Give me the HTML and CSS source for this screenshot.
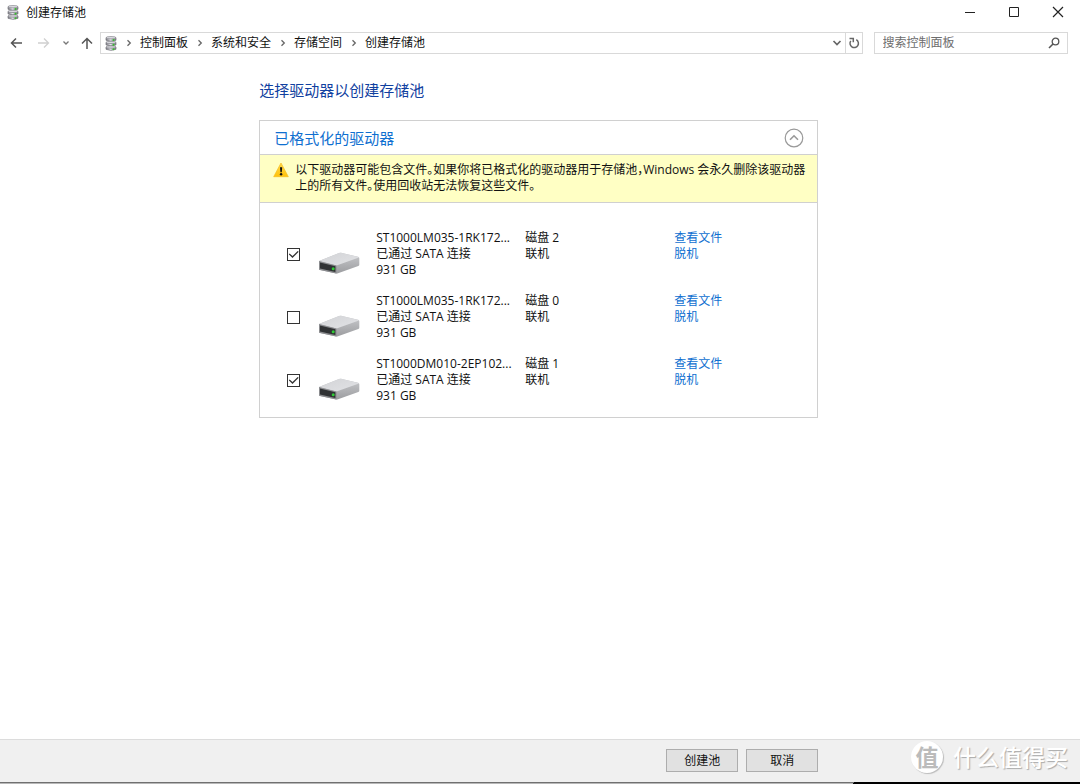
FILE: index.html
```html
<!DOCTYPE html>
<html lang="zh-CN">
<head>
<meta charset="utf-8">
<meta name="viewport" content="width=device-width, initial-scale=1">
<title>创建存储池</title>
<link rel="stylesheet" href="styles.css">
</head>
<body>
<svg class="defs" width="0" height="0" aria-hidden="true">
  <defs>
    <linearGradient id="disk" x1="0" x2="1"><stop offset="0" stop-color="#77777f"/><stop offset=".45" stop-color="#e4e4ea"/><stop offset="1" stop-color="#77777f"/></linearGradient>
    <linearGradient id="top" x1="0" y1="0" x2="1" y2="1"><stop offset="0" stop-color="#d2d3d6"/><stop offset="1" stop-color="#e2e3e6"/></linearGradient>
    <linearGradient id="side" x1="0" y1="0" x2="0" y2="1"><stop offset="0" stop-color="#c9cacd"/><stop offset="1" stop-color="#9c9da0"/></linearGradient>
    <linearGradient id="warn" x1="0" y1="0" x2="0" y2="1"><stop offset="0" stop-color="#ffd84a"/><stop offset="1" stop-color="#ffc20a"/></linearGradient>
  </defs>
  <symbol id="pool" viewBox="0 0 12 15">
    <g fill="url(#disk)" stroke="#77777d" stroke-width=".7">
      <path d="M1 11v2.300q5 2.200 10 0V11q-5 1.500-10 0z"/><path d="M1 6.300v2.600q5 2 10 0V6.300q-5 1.500-10 0z"/><path d="M1 1.700v2.600q5 2 10 0V1.700q-5 1.500-10 0z"/>
    </g>
    <g fill="#dedee4" stroke="#77777d" stroke-width=".6"><ellipse cx="6" cy="1.700" rx="5" ry="1.200"/><ellipse cx="6" cy="6.400" rx="5" ry="1.100"/><ellipse cx="6" cy="11" rx="5" ry="1.100"/></g>
    <g fill="#35c02b"><circle cx="8.500" cy="4" r="1"/><circle cx="8.500" cy="8.700" r="1"/><circle cx="8.500" cy="13.200" r="1"/></g>
  </symbol>
  <symbol id="chev" viewBox="0 0 6 8"><path d="M1.500 1.200 4.300 4 1.500 6.800" fill="none" stroke="#666" stroke-width="1.300"/></symbol>
  <symbol id="drive" viewBox="0 0 42 22">
    <path d="M1 9 21 1q1-.5 2-.3l17 4.100q1.300.3 1.300 1.400v6.600q0 .8-1 1.200L20 21.300q-1 .4-2 .2L2 18q-1-.2-1-1z" fill="url(#side)"/>
    <path d="M1 9 21 1q1-.5 2-.3l17.500 4.200q.8.3-.3.9L18.500 13.500z" fill="url(#top)"/>
    <path d="M1 8.900 18.500 13.500v8L2 18q-1-.2-1-1z" fill="#8b8c8f"/>
    <path d="M2 10.400 17.400 14.300v5.600L2 16.500z" fill="#303234"/>
    <circle cx="15.200" cy="16.700" r="1.500" fill="#2fca35"/>
  </symbol>
</svg>
<div class="window">
  <header class="titlebar">
    <svg class="pool"><use href="#pool"/></svg>
    <span class="title">创建存储池</span>
    <div class="caption">
      <button type="button" aria-label="最小化"><svg width="12" height="12"><path d="M1 6.500h10" stroke="#222" /></svg></button>
      <button type="button" aria-label="最大化"><svg width="12" height="12"><path d="M1.500 1.500h9v9h-9z" fill="none" stroke="#222"/></svg></button>
      <button type="button" aria-label="关闭"><svg width="12" height="12"><path d="m1 1 10 10M11 1 1 11" stroke="#222" stroke-width="1.200"/></svg></button>
    </div>
  </header>
  <nav class="navbar" aria-label="地址">
    <div class="travel">
      <button type="button" aria-label="后退"><svg width="12" height="12"><path d="M12 6H1.500M6 1.500 1.500 6 6 10.500" fill="none" stroke="#555" stroke-width="1.500"/></svg></button>
      <button type="button" aria-label="前进" disabled><svg width="12" height="12"><path d="M0 6h10.500M6 1.500 10.500 6 6 10.500" fill="none" stroke="#d0d0d0" stroke-width="1.300"/></svg></button>
      <button type="button" class="recent" aria-label="最近位置"><svg width="8" height="6"><path d="M1.500 1.500 4 4l2.500-2.500" fill="none" stroke="#777" stroke-width="1.300"/></svg></button>
      <button type="button" aria-label="向上"><svg width="12" height="12"><path d="M6 12V1.500M1 6.500l5-5 5 5" fill="none" stroke="#555" stroke-width="1.500"/></svg></button>
    </div>
    <div class="address">
      <svg class="pool"><use href="#pool"/></svg>
      <ol class="crumbs">
        <li><svg class="chev"><use href="#chev"/></svg><a href="#">控制面板</a></li>
        <li><svg class="chev"><use href="#chev"/></svg><a href="#">系统和安全</a></li>
        <li><svg class="chev"><use href="#chev"/></svg><a href="#">存储空间</a></li>
        <li><svg class="chev"><use href="#chev"/></svg><a href="#">创建存储池</a></li>
      </ol>
      <button type="button" class="drop" aria-label="历史"><svg width="10" height="8"><path d="M1.500 2 5 5.500 8.500 2" fill="none" stroke="#666" stroke-width="1.700"/></svg></button>
      <button type="button" class="refresh" aria-label="刷新"><svg width="12" height="12"><path d="M2.800 3.900A4.200 4.200 0 1 0 8.300 2.700M1.500 1.500h3.800v3.800" fill="none" stroke="#666" stroke-width="1.500"/></svg></button>
    </div>
    <div class="search">
      <input type="search" aria-label="搜索控制面板" placeholder="搜索控制面板">
      <svg width="12" height="12"><circle cx="7.500" cy="4.500" r="3.300" fill="none" stroke="#555" stroke-width="1.300"/><path d="M5 7 1 11" stroke="#555" stroke-width="1.600"/></svg>
    </div>
  </nav>
  <main class="content">
    <h1>选择驱动器以创建存储池</h1>
    <section class="panel">
      <div class="panel-head">
        <h2>已格式化的驱动器</h2>
        <button type="button" aria-label="折叠"><svg width="20" height="20"><circle cx="10" cy="10" r="8.800" fill="none" stroke="#999" stroke-width="1.200"/><path d="m6 11.800 4-4 4 4" fill="none" stroke="#999" stroke-width="1.600"/></svg></button>
      </div>
      <div class="warning">
        <svg width="16" height="16" viewBox="0 0 16 16"><path d="M8 1 15.300 14.700H.7z" fill="url(#warn)" stroke="#f5bd20" stroke-width=".7" stroke-linejoin="round"/><path d="M7 5.300h2.200l-.4 4.900H7.400z" fill="#111"/><circle cx="8.100" cy="12.300" r="1.200" fill="#111"/></svg>
        <p>以下驱动器可能包含文件。如果你将已格式化的驱动器用于存储池，Windows 会永久删除该驱动器<br>上的所有文件。使用回收站无法恢复这些文件。</p>
      </div>
      <ul class="drives">
        <li>
          <input type="checkbox" id="d2" checked>
          <svg class="drive"><use href="#drive"/></svg>
          <label for="d2"><span>ST1000LM035-1RK172...</span><span>已通过 SATA 连接</span><span>931 GB</span></label>
          <div class="lines"><span>磁盘 2</span><span>联机</span></div>
          <div class="lines"><a href="#">查看文件</a><a href="#">脱机</a></div>
        </li>
        <li>
          <input type="checkbox" id="d0">
          <svg class="drive"><use href="#drive"/></svg>
          <label for="d0"><span>ST1000LM035-1RK172...</span><span>已通过 SATA 连接</span><span>931 GB</span></label>
          <div class="lines"><span>磁盘 0</span><span>联机</span></div>
          <div class="lines"><a href="#">查看文件</a><a href="#">脱机</a></div>
        </li>
        <li>
          <input type="checkbox" id="d1" checked>
          <svg class="drive"><use href="#drive"/></svg>
          <label for="d1"><span>ST1000DM010-2EP102...</span><span>已通过 SATA 连接</span><span>931 GB</span></label>
          <div class="lines"><span>磁盘 1</span><span>联机</span></div>
          <div class="lines"><a href="#">查看文件</a><a href="#">脱机</a></div>
        </li>
      </ul>
    </section>
  </main>
  <footer class="footer">
    <div class="actions">
      <button type="button">创建池</button>
      <button type="button">取消</button>
    </div>
    <div class="watermark"><span class="seal">值</span><span>什么值得买</span></div>
  </footer>
  <div class="edge"></div>
</div>
</body>
</html>
```
FILE: styles.css
```css
* { box-sizing: border-box; }

body {
  margin: 0;
  background: #fff;
  color: #111;
  font: 12px/16px "Open Sans", "Noto Sans CJK SC", sans-serif;
}

h1, h2, p, ul, ol { margin: 0; padding: 0; font-weight: 400; }
ul, ol { list-style: none; }
a { color: inherit; text-decoration: none; }
svg { display: block; flex: none; }
.defs { position: absolute; }

button {
  padding: 0;
  border: 0;
  background: none;
  color: inherit;
  font: inherit;
}

.window { display: flex; flex-direction: column; min-height: 100vh; }

.pool { width: 12px; height: 15px; }
.chev { width: 6px; height: 8px; }

.titlebar {
  display: flex;
  align-items: center;
  height: 24px;
  padding-left: 7px;
}
.title { margin-left: 7px; line-height: 18px; padding-top: 1px; }
.caption { display: flex; margin-left: auto; }
.caption button { display: grid; place-items: center; width: 44px; height: 24px; }

.navbar {
  display: flex;
  align-items: center;
  height: 22px;
  margin: 8px 12px 0 10px;
}
.travel { display: flex; align-items: center; gap: 16px; margin-right: 7px; }
.travel .recent { margin: 0 -5px 0 -4px; }
.address {
  display: flex;
  flex: 1;
  align-items: center;
  height: 22px;
  padding-left: 4px;
  border: 1px solid #d9d9d9;
}
.crumbs { display: flex; flex: 1; gap: 9px; margin-left: 9px; }
.crumbs li { display: flex; align-items: center; gap: 8px; }
.drop { display: grid; place-items: center; width: 16px; height: 20px; }
.refresh {
  display: grid;
  place-items: center;
  width: 17px;
  height: 20px;
  border-left: 1px solid #d9d9d9;
}
.search {
  display: flex;
  align-items: center;
  flex: 0 0 18%;
  box-sizing: content-box;
  height: 20px;
  margin-left: 11px;
  padding: 0 1px;
  border: 1px solid #d9d9d9;
}
.search input {
  flex: 1;
  min-width: 0;
  padding: 0 0 0 7px;
  border: 0;
  outline: 0;
  background: none;
  font: inherit;
}
.search svg { margin-right: 6px; }
.search input::placeholder { color: #6d6d6d; opacity: 1; }

.content { flex: 1; max-width: 559px; width: 100%; margin: 26px 0 24px 24%; }
h1 { color: #1040a0; font-size: 15px; line-height: 20px; }
.panel { margin-top: 20px; border: 1px solid #d0d0d0; }
.panel-head {
  display: flex;
  align-items: center;
  justify-content: space-between;
  height: 33px;
  padding: 0 13px 0 14px;
}
h2 { color: #0f6fd0; font-size: 15px; line-height: 20px; }
.warning {
  display: flex;
  gap: 6px;
  padding: 7px 0 8px 13px;
  border: solid #d0d0d0;
  border-width: 1px 0;
  background: #ffffc4;
}
.warning p { font-feature-settings: "halt"; white-space: nowrap; }

.drives { display: grid; gap: 15px; padding: 27px 16px 13px 27px; }
.drives li {
  display: grid;
  grid-template-columns: 31px 58px 149px 149px 1fr;
  min-height: 48px;
}
.drives input {
  appearance: none;
  display: grid;
  place-items: center;
  width: 13px;
  height: 13px;
  margin: 18px 0 0;
  border: 1px solid #333;
  background: #fff;
}
.drives input:checked::before {
  content: "";
  width: 10px;
  height: 9px;
  background: #333;
  clip-path: polygon(0 48%, 10% 38%, 38% 68%, 90% 10%, 100% 20%, 38% 90%);
}
.drive { width: 42px; height: 22px; margin-top: 22px; }
.drives label, .lines { display: flex; flex-direction: column; align-items: flex-start; }
.lines a { color: #0f6fd0; }

.footer {
  position: relative;
  padding: 9px 0 10px;
  border-top: 1px solid #dcdcdc;
  background: #f0f0f0;
}
.actions {
  display: flex;
  justify-content: flex-end;
  gap: 8px;
  max-width: 559px;
  margin-left: 24%;
}
.actions button {
  width: 72px;
  height: 23px;
  border: 1px solid #adadad;
  background: #e1e1e1;
}
.watermark {
  position: absolute;
  top: 1px;
  right: 12px;
  display: flex;
  align-items: center;
  gap: 10px;
  color: #fff;
  font-size: 23px;
  font-weight: 500;
  line-height: 32px;
  text-shadow: 1px 1px 1px #aaa;
}
.seal {
  width: 32px;
  height: 32px;
  border-radius: 50%;
  background: #fff;
  box-shadow: 1px 1px 1px #bbb;
  color: #bbb;
  font-weight: 700;
  text-align: center;
  text-shadow: none;
}
.edge {
  height: 2px;
  border-top: 1px solid #707070;
  background: linear-gradient(to right, #b8b8b8 79%, #000 79%);
  border-image: linear-gradient(to right, #707070 79%, #000 79%) 1;
}
```
